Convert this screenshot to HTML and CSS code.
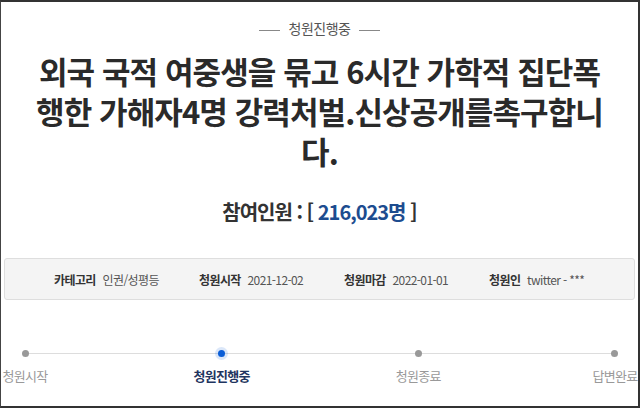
FILE: index.html
```html
<!DOCTYPE html>
<html lang="ko">
<head>
    <meta charset="UTF-8">
    <title>청원진행중</title>
    <link rel="stylesheet" href="styles.css">
</head>
<body>
<div class="page">
    <p class="status">청원진행중</p>
    <h1 class="title">외국 국적 여중생을 묶고 6시간 가학적 집단폭<br>행한 가해자4명 강력처벌.신상공개를촉구합니<br>다.</h1>
    <p class="count">참여인원 : [ <span class="num">216,023명</span> ]</p>

    <div class="info">
        <div class="info-item"><b>카테고리</b> 인권/성평등</div>
        <div class="info-item"><b>청원시작</b> 2021-12-02</div>
        <div class="info-item"><b>청원마감</b> 2022-01-01</div>
        <div class="info-item"><b>청원인</b> twitter - ***</div>
    </div>

    <div class="progress">
        <div class="track"></div>
        <div class="step"><span class="dot"></span><span class="label">청원시작</span></div>
        <div class="step active"><span class="dot"></span><span class="label">청원진행중</span></div>
        <div class="step"><span class="dot"></span><span class="label">청원종료</span></div>
        <div class="step"><span class="dot"></span><span class="label">답변완료</span></div>
    </div>
</div>
</body>
</html>
```

FILE: styles.css
```css
/* Global */
html, body {
    margin: 0;
    padding: 0;
    background: #fff;
}

body {
    font-family: "Noto Sans CJK KR", "Noto Sans", sans-serif;
    color: #333;
}

.page {
    box-sizing: border-box;
    width: 640px;
    height: 408px;
    border-top: 2px solid #333;
    border-left: 1px solid #444;
    border-right: 2px solid #333;
    border-bottom: 2px solid #333;
    overflow: hidden;
}

/* Status heading */
.status {
    margin: 15px 0 0;
    text-align: center;
    font-size: 14px;
    line-height: 22px;
    color: #555;
    letter-spacing: -0.5px;
}

.status::before, .status::after {
    content: "";
    display: inline-block;
    width: 21px;
    height: 1px;
    background: #888;
    vertical-align: middle;
    margin: 0 9px;
}

/* Title */
.title {
    margin: 12px 0 0;
    text-align: center;
    font-size: 31px;
    line-height: 40px;
    font-weight: bold;
    color: #2a2a2a;
    letter-spacing: -0.9px;
}

/* Participants */
.count {
    margin: 27px 0 0;
    text-align: center;
    font-size: 20px;
    line-height: 28px;
    font-weight: bold;
    color: #333;
    letter-spacing: -1px;
}

.count .num {
    color: #1d4c8f;
}

/* Info box */
.info {
    margin: 32px 3px 0 3px;
    height: 42px;
    box-sizing: border-box;
    background: #f4f4f4;
    border: 1px solid #dedede;
    border-radius: 3px;
    display: grid;
    grid-template-columns: repeat(4, 145px);
    align-items: center;
    padding-left: 49px;
    font-size: 12px;
    color: #555;
    letter-spacing: -0.6px;
}

.info-item b {
    color: #333;
    margin-right: 4px;
}

/* Progress steps */
.progress {
    position: relative;
    display: flex;
    justify-content: space-between;
    margin-top: 49px;
    padding: 0 0 0 1px;
}

.track {
    position: absolute;
    left: 24px;
    right: 24px;
    top: 4px;
    height: 1px;
    background: #ddd;
}

.step {
    position: relative;
    width: 46px;
    display: flex;
    flex-direction: column;
    align-items: center;
}

.step .dot {
    width: 7px;
    height: 7px;
    border-radius: 50%;
    background: #999;
    margin-top: 1px;
}

.step .label {
    margin-top: 9px;
    font-size: 13px;
    color: #999;
    white-space: nowrap;
    letter-spacing: -0.7px;
}

.step.active .dot {
    background: #0b5ed7;
    box-shadow: 0 0 0 3px rgba(11, 94, 215, 0.15);
}

.step.active .label {
    color: #1f3560;
    font-weight: bold;
}
```
